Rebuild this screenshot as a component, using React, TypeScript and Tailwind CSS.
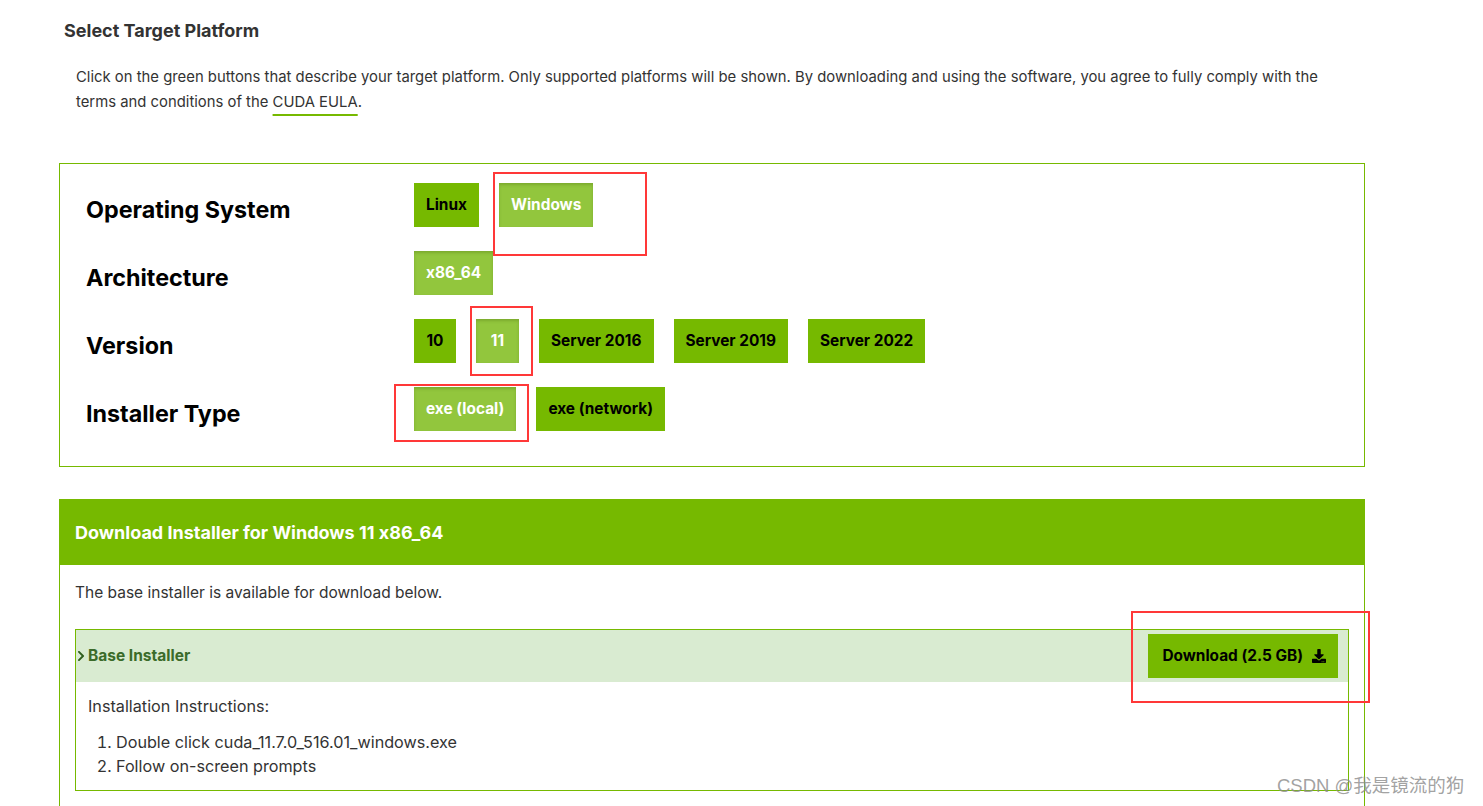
import React from "react";
import { FaDownload, FaChevronRight } from "react-icons/fa";

const font = {
  fontFamily: 'Inter, "Noto Sans", "Liberation Sans", sans-serif',
  fontFeatureSettings: '"calt" 0',
};

function Btn({ label, selected, wide }: { label: string; selected?: boolean; wide?: boolean }) {
  return (
    <div
      className={
        "h-[44px] px-[12px] flex items-center justify-center text-[15.4px] font-bold " +
        (wide ? "min-w-[43px] " : "min-w-[42px] ") +
        (selected
          ? "bg-[#92c63d] text-white shadow-[inset_0_2px_3px_rgba(60,90,0,0.25)]"
          : "bg-[#76b900] text-black")
      }
    >
      {label}
    </div>
  );
}

function Row({ label, children }: { label: string; children: React.ReactNode }) {
  return (
    <div className="flex items-center h-[44px]">
      <div className="w-[328px] text-[23.3px] font-bold text-black translate-y-[5px]">{label}</div>
      <div className="flex gap-[20px]">{children}</div>
    </div>
  );
}

function RedBox({ className }: { className: string }) {
  return <div className={"absolute border-2 border-[#ff3838] " + className} />;
}

export default function App() {
  return (
    <div className="relative w-[1483px] h-[806px] bg-white overflow-hidden text-[#333]" style={font}>
      <div className="pl-[59px] w-[1365px]">
        <h2 className="ml-[5px] pt-[19px] text-[18px] leading-[24px] font-bold text-[#333]">
          Select Target Platform
        </h2>
        <p className="ml-[17px] mt-[22px] w-[1260px] text-[14.85px] leading-[25px] text-[#333]">
          Click on the green buttons that describe your target platform. Only supported platforms will be shown. By
          downloading and using the software, you agree to fully comply with the terms and conditions of the{" "}
          <span className="underline decoration-[#76b900] decoration-2 underline-offset-[7px]">CUDA EULA</span>.
        </p>

        <div className="mt-[48px] border border-[#76b900] pl-[26px] pt-[19px] pb-[35px] flex flex-col gap-[24px]">
          <Row label="Operating System">
            <Btn label="Linux" />
            <Btn label="Windows" selected />
          </Row>
          <Row label="Architecture">
            <Btn label="x86_64" selected />
          </Row>
          <Row label="Version">
            <Btn label="10" />
            <Btn label="11" selected wide />
            <Btn label="Server 2016" />
            <Btn label="Server 2019" />
            <Btn label="Server 2022" />
          </Row>
          <Row label="Installer Type">
            <Btn label="exe (local)" selected />
            <Btn label="exe (network)" />
          </Row>
        </div>

        <div className="mt-[32px]">
          <div className="h-[66px] bg-[#76b900] flex items-center pl-[16px] text-white text-[18px] font-bold">
            Download Installer for Windows 11 x86_64
          </div>
          <div className="border-x border-[#76b900] px-[15px] h-[260px]">
            <p className="pt-[16px] text-[15.5px] leading-[24px] text-[#333]">
              The base installer is available for download below.
            </p>
            <div className="mt-[24px] border border-[#76b900]">
              <div className="h-[52px] bg-[#d9ebd1] flex items-center justify-between pr-[10px]">
                <div className="flex items-center text-[15.5px] font-bold text-[#3b6b2a]">
                  <FaChevronRight className="w-[10px] h-[12px] text-[#2f5e1e]" />
                  <span className="ml-[2px]">Base Installer</span>
                </div>
                <div className="h-[44px] bg-[#76b900] flex items-center pl-[14px] pr-[12px] gap-[9px] text-black text-[15.4px] font-bold">
                  <span>Download (2.5 GB)</span>
                  <FaDownload className="w-[14px] h-[14px]" />
                </div>
              </div>
              <div className="pl-[12px] pt-[12px] pb-[12px] text-[16.2px] text-[#333]">
                <p className="leading-[24px]">Installation Instructions:</p>
                <ol className="mt-[12px] pl-[28px] list-decimal leading-[24px]">
                  <li>Double click cuda_11.7.0_516.01_windows.exe</li>
                  <li>Follow on-screen prompts</li>
                </ol>
              </div>
            </div>
          </div>
        </div>
      </div>

      <RedBox className="left-[493px] top-[172px] w-[154px] h-[84px]" />
      <RedBox className="left-[470px] top-[306px] w-[63px] h-[70px]" />
      <RedBox className="left-[394px] top-[384px] w-[135px] h-[58px]" />
      <RedBox className="left-[1131px] top-[611px] w-[239px] h-[92px]" />

      <div
        className="absolute left-[1277px] top-[774px] text-[18.5px] leading-[24px] text-[#8a8a8a]/80 whitespace-nowrap"
        style={{ fontFamily: '"Liberation Sans", "Noto Sans CJK SC", sans-serif' }}
      >
        CSDN @我是镜流的狗
      </div>
    </div>
  );
}
